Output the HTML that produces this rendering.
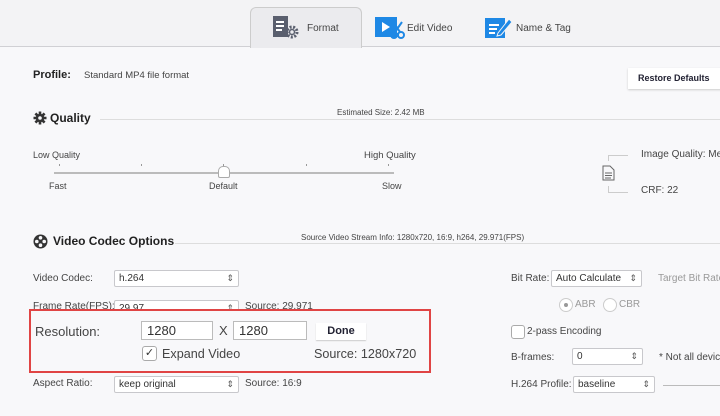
<!DOCTYPE html><html><head><style>
body{margin:0;width:720px;height:416px;overflow:hidden;background:#f8f8fa;font-family:"Liberation Sans",sans-serif;color:#333;position:relative}
.a{position:absolute;white-space:nowrap}
.s{font-size:10px;color:#444}
.sel{position:absolute;background:#fff;border:1px solid #c8c8cc;border-radius:2px;font-size:10px;line-height:15px;padding-left:4px;box-sizing:border-box;height:17px}
.sel:after{content:"⇕";position:absolute;right:4px;top:0;font-size:9px;color:#555}
.ln{position:absolute;height:1px;background:#ddd}
.dot{position:absolute;width:1px;height:2px;background:#999;top:164px}
</style></head><body>
<div class="a" style="left:0;top:0;width:720px;height:46px;background:#f3f3f5;border-bottom:1px solid #d0d0d4"></div>
<div class="a" style="left:250px;top:7px;width:110px;height:40px;background:#ebebee;border:1px solid #ccc;border-bottom:none;border-radius:6px 6px 0 0"></div>
<svg class="a" style="left:273px;top:16px" width="28" height="24"><rect x="0" y="0" width="15" height="21" fill="#5a5f6e"/><rect x="3" y="5" width="8" height="2" fill="#fff"/><rect x="3" y="9" width="8" height="2" fill="#fff"/><rect x="3" y="13" width="6" height="2" fill="#fff"/><circle cx="19" cy="16" r="5" fill="none" stroke="#5a5f6e" stroke-width="3" stroke-dasharray="2 1.5"/><circle cx="19" cy="16" r="2.5" fill="none" stroke="#5a5f6e" stroke-width="1.5"/></svg>
<div class="a s" style="left:307px;top:23px;font-size:10px">Format</div>
<svg class="a" style="left:375px;top:16px" width="30" height="24"><rect x="0" y="1" width="22" height="20" fill="#1e88e5"/><path d="M7 6 L15 11 L7 16Z" fill="#fff"/><circle cx="19" cy="19" r="3" fill="none" stroke="#1e88e5" stroke-width="2"/><circle cx="26" cy="19" r="3" fill="none" stroke="#1e88e5" stroke-width="2"/><path d="M20 16 L27 6 M25 16 L18 6" stroke="#1e88e5" stroke-width="2"/></svg>
<div class="a s" style="left:407px;top:23px">Edit Video</div>
<svg class="a" style="left:485px;top:16px" width="28" height="24"><rect x="0" y="2" width="20" height="20" fill="#1e88e5"/><rect x="4" y="8" width="10" height="2" fill="#fff"/><rect x="4" y="12" width="8" height="2" fill="#fff"/><rect x="4" y="16" width="6" height="2" fill="#fff"/><path d="M13 17 L24 3 L27 6 L16 19 L12 20Z" fill="#1e88e5" stroke="#f3f3f5" stroke-width="1"/></svg>
<div class="a s" style="left:516px;top:23px">Name &amp; Tag</div>

<div class="a" style="left:33px;top:69px;font-size:11px;font-weight:bold;color:#222">Profile:</div>
<div class="a s" style="left:84px;top:70px;font-size:9.5px">Standard MP4 file format</div>
<div class="a" style="left:628px;top:68px;width:100px;height:21px;background:#fff;box-shadow:0 1px 2px #ccc;font-size:9px;font-weight:bold;line-height:21px;padding-left:10px;color:#223">Restore Defaults</div>

<div class="ln" style="left:100px;top:119px;width:620px"></div>
<svg class="a" style="left:33px;top:111px" width="14" height="14" viewBox="0 0 14 14"><g stroke="#333" stroke-width="2.6" stroke-linecap="butt"><path d="M7 0.5V13.5M0.5 7H13.5M2.4 2.4L11.6 11.6M11.6 2.4L2.4 11.6"/></g><circle cx="7" cy="7" r="4.3" fill="#333"/><circle cx="7" cy="7" r="1.8" fill="#f8f8fa"/></svg>
<div class="a" style="left:50px;top:111px;font-size:12px;font-weight:bold;color:#222">Quality</div>
<div class="a" style="left:337px;top:108px;font-size:8px;color:#444">Estimated Size: 2.42 MB</div>
<div class="a s" style="left:33px;top:150px;font-size:9px">Low Quality</div>
<div class="a s" style="left:364px;top:150px;font-size:9.5px">High Quality</div>
<div class="dot" style="left:59px"></div><div class="dot" style="left:141px"></div><div class="dot" style="left:223px"></div><div class="dot" style="left:306px"></div><div class="dot" style="left:388px"></div>
<div class="ln" style="left:54px;top:172px;width:340px;height:2px;background:#bbb"></div>
<div class="a" style="left:218px;top:166px;width:10px;height:10px;background:#fff;border:1px solid #aaa;border-radius:5px 5px 2px 2px"></div>
<div class="a s" style="left:49px;top:181px;font-size:9px">Fast</div>
<div class="a s" style="left:209px;top:181px;font-size:9px">Default</div>
<div class="a s" style="left:382px;top:181px;font-size:9px">Slow</div>
<div class="a" style="left:608px;top:155px;width:20px;height:1px;background:#ccc"></div>
<div class="a" style="left:608px;top:155px;width:1px;height:6px;background:#ccc"></div>
<div class="a" style="left:608px;top:186px;width:1px;height:6px;background:#ccc"></div>
<div class="a" style="left:608px;top:192px;width:20px;height:1px;background:#ccc"></div>
<svg class="a" style="left:602px;top:165px" width="13" height="16"><path d="M1 1 H8 L12 5 V15 H1Z M3 8 H10 M3 10.5 H10 M3 13 H9" fill="none" stroke="#666" stroke-width="1"/></svg>
<div class="a s" style="left:641px;top:149px">Image Quality: Me</div>
<div class="a s" style="left:641px;top:185px">CRF: 22</div>

<div class="ln" style="left:175px;top:243px;width:545px"></div>
<svg class="a" style="left:33px;top:234px" width="15" height="15"><circle cx="7.5" cy="7.5" r="7" fill="#333"/><circle cx="7.5" cy="3.8" r="1.8" fill="#f8f8fa"/><circle cx="7.5" cy="11.2" r="1.8" fill="#f8f8fa"/><circle cx="3.8" cy="7.5" r="1.8" fill="#f8f8fa"/><circle cx="11.2" cy="7.5" r="1.8" fill="#f8f8fa"/></svg>
<div class="a" style="left:53px;top:234px;font-size:12px;font-weight:bold;color:#222">Video Codec Options</div>
<div class="a" style="left:301px;top:233px;font-size:8px;color:#444">Source Video Stream Info: 1280x720, 16:9, h264, 29.971(FPS)</div>

<div class="a s" style="left:33px;top:273px">Video Codec:</div>
<div class="sel" style="left:114px;top:270px;width:125px">h.264</div>
<div class="a s" style="left:33px;top:301px">Frame Rate(FPS):</div>
<div class="sel" style="left:114px;top:300px;width:125px">29.97</div>
<div class="a s" style="left:245px;top:301px">Source: 29.971</div>

<div class="a" style="left:29px;top:309px;width:398px;height:60px;background:#f8f8fa;border:2px solid #e04444"></div>
<div class="a" style="left:35px;top:324px;font-size:13px;color:#444">Resolution:</div>
<div class="a" style="left:141px;top:321px;width:72px;height:19px;background:#fff;border:1px solid #bbb;box-sizing:border-box;font-size:13px;padding-left:5px;line-height:17px">1280</div>
<div class="a" style="left:219px;top:323px;font-size:13px;color:#444">X</div>
<div class="a" style="left:233px;top:321px;width:74px;height:19px;background:#fff;border:1px solid #bbb;box-sizing:border-box;font-size:13px;padding-left:5px;line-height:17px">1280</div>
<div class="a" style="left:316px;top:323px;width:50px;height:17px;background:#fff;box-shadow:0 1px 1px #ccc;font-size:11px;font-weight:bold;text-align:center;line-height:17px;color:#223">Done</div>
<div class="a" style="left:142px;top:346px;width:15px;height:15px;background:#fff;border:1px solid #aaa;border-radius:3px;box-sizing:border-box;font-size:11px;text-align:center;line-height:13px">✓</div>
<div class="a" style="left:162px;top:347px;font-size:12.6px;color:#444">Expand Video</div>
<div class="a" style="left:314px;top:347px;font-size:12.6px;color:#444">Source: 1280x720</div>

<div class="a s" style="left:33px;top:378px">Aspect Ratio:</div>
<div class="sel" style="left:114px;top:376px;width:125px">keep original</div>
<div class="a s" style="left:245px;top:378px">Source: 16:9</div>

<div class="a s" style="left:511px;top:273px">Bit Rate:</div>
<div class="sel" style="left:551px;top:270px;width:91px">Auto Calculate</div>
<div class="a s" style="left:658px;top:273px;color:#999">Target Bit Rate</div>
<div class="a" style="left:559px;top:298px;width:12px;height:12px;border:1px solid #ccc;border-radius:50%;background:#fff"></div>
<div class="a" style="left:564px;top:303px;width:4px;height:4px;border-radius:50%;background:#999"></div>
<div class="a s" style="left:575px;top:299px;color:#999">ABR</div>
<div class="a" style="left:603px;top:298px;width:12px;height:12px;border:1px solid #ccc;border-radius:50%;background:#fff"></div>
<div class="a s" style="left:619px;top:299px;color:#999">CBR</div>
<div class="a" style="left:511px;top:325px;width:12px;height:12px;border:1px solid #aaa;border-radius:3px;background:#fff"></div>
<div class="a s" style="left:527px;top:326px">2-pass Encoding</div>
<div class="a s" style="left:511px;top:352px">B-frames:</div>
<div class="sel" style="left:572px;top:348px;width:71px">0</div>
<div class="a s" style="left:659px;top:352px">* Not all devic</div>
<div class="a s" style="left:511px;top:379px">H.264 Profile:</div>
<div class="sel" style="left:573px;top:376px;width:82px">baseline</div>
<div class="ln" style="left:663px;top:385px;width:57px;background:#bbb"></div>
</body></html>
